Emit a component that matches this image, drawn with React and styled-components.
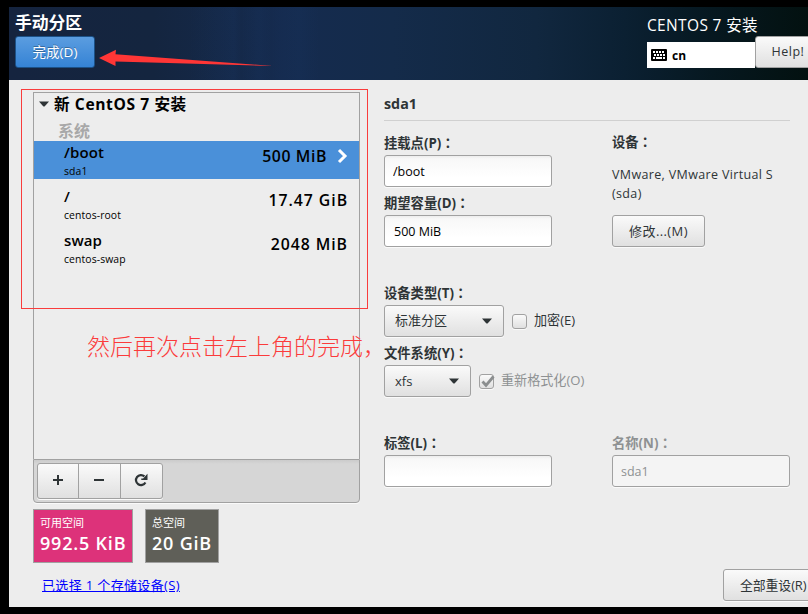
import React from 'react';
import styled, { createGlobalStyle, css } from 'styled-components';

const GlobalStyle = createGlobalStyle`
  * {
    box-sizing: border-box;
  }

  body {
    margin: 0;
    background: #000;
    color: #2e3436;
    font-family: "Open Sans", "Noto Sans CJK SC", sans-serif;
    font-size: 12px;
    overflow: hidden;
  }
`;

const mounts = [
  { name: '/boot', device: 'sda1', size: '500 MiB', active: true, spacing: 0.6 },
  { name: '/', device: 'centos-root', size: '17.47 GiB', spacing: 0.95 },
  { name: 'swap', device: 'centos-swap', size: '2048 MiB', spacing: 0.95 },
];

const Keyboard = () => (
  <svg width="16" height="12" viewBox="0 0 16 12">
    <rect width="16" height="12" rx="1" fill="#000" />
    <path
      d="M2 2h2v2H2zM5 2h2v2H5zM8 2h2v2H8zM11 2h2v2h-2zM3 5h2v2H3zM6 5h2v2H6zM9 5h2v2H9zM12 5h2v2h-2zM2 8h2v2H2zM5 8h6v2H5zM12 8h2v2h-2z"
      fill="#fff"
    />
  </svg>
);

const Caret = () => (
  <svg width="10" height="6" viewBox="0 0 10 6">
    <path d="M0 .5h10L5.8 5.2q-.8.8-1.6 0z" fill="#2e3436" />
  </svg>
);

const Chevron = () => (
  <svg width="11" height="16" viewBox="0 0 11 16">
    <path d="M2 2l6 6-6 6" fill="none" stroke="#fff" strokeWidth="3" />
  </svg>
);

const Reload = () => (
  <svg width="14" height="14" viewBox="0 0 14 14">
    <path d="M11.4 9.4A5 5 0 1 1 10.4 3.4" fill="none" stroke="#2e3436" strokeWidth="2.2" />
    <path d="M13.5.8V7H7.3V5.6h1.8L13 1.2z" fill="#2e3436" />
  </svg>
);

const Check = () => (
  <svg width="16" height="14" viewBox="0 0 16 14">
    <path d="M2.5 6.5L6 10.3l7.5-8.8" fill="none" stroke="#8b8e8f" strokeWidth="2.8" />
  </svg>
);

const App = () => {
  return (
    <Screen>
      <GlobalStyle />
      <Header>
        <HeaderLeft>
          <Title>手动分区</Title>
          <PrimaryButton width={80}>完成(D)</PrimaryButton>
        </HeaderLeft>
        <Product>
          <ProductName>CENTOS 7 安装</ProductName>
          <Layout>
            <Keyboard />
            <span>cn</span>
          </Layout>
        </Product>
        <HelpButton width={66}>Help!</HelpButton>
      </Header>

      <Content>
        <Sidebar>
          <Tree>
            <TreeTitle>
              <Caret />
              <span>新 CentOS 7 安装</span>
            </TreeTitle>
            <Group>系统</Group>
            {mounts.map((mount) => (
              <Row key={mount.name} $active={mount.active}>
                <div>
                  <Mount>{mount.name}</Mount>
                  <Device>{mount.device}</Device>
                </div>
                <Size $spacing={mount.spacing}>
                  {mount.size}
                  {mount.active && <Chevron />}
                </Size>
              </Row>
            ))}
          </Tree>
          <Toolbar>
            <Tools>
              <Tool>
                <svg width="10" height="10"><path d="M5 0v10M0 5h10" stroke="#2e3436" strokeWidth="2" /></svg>
              </Tool>
              <Tool>
                <svg width="10" height="10"><path d="M0 5h10" stroke="#2e3436" strokeWidth="2" /></svg>
              </Tool>
              <Tool>
                <Reload />
              </Tool>
            </Tools>
          </Toolbar>
          <Stats>
            <Stat $color="#dd327a" $width={100}>
              <small>可用空间</small>
              <strong>992.5 KiB</strong>
            </Stat>
            <Stat $color="#5f5f58" $width={74}>
              <small>总空间</small>
              <strong>20 GiB</strong>
            </Stat>
          </Stats>
          <StorageLink href="#">已选择 1 个存储设备(S)</StorageLink>
        </Sidebar>

        <Details>
          <DetailsTitle>sda1</DetailsTitle>
          <Columns>
            <Fields>
              <Field>
                <Label>挂载点(P)<Colon>：</Colon></Label>
                <Input defaultValue="/boot" />
              </Field>
              <Field>
                <Label>期望容量(D)<Colon>：</Colon></Label>
                <Input defaultValue="500 MiB" $indent={9} />
              </Field>
            </Fields>
            <DeviceInfo>
              <DeviceLabel>设备<Colon>：</Colon></DeviceLabel>
              <p>VMware, VMware Virtual S<br />(sda)</p>
              <ModifyButton width={93}>修改...(M)</ModifyButton>
            </DeviceInfo>

            <Fields>
              <Field>
                <Label>设备类型(T)<Colon>：</Colon></Label>
                <Line>
                  <Select $width={120}><Choice $lift={4}>标准分区</Choice> <Caret /></Select>
                  <Checkbox>
                    <i />
                    <span>加密(E)</span>
                  </Checkbox>
                </Line>
              </Field>
              <Field>
                <Label>文件系统(Y)<Colon>：</Colon></Label>
                <Line>
                  <Select $width={87}><Choice>xfs</Choice> <Caret /></Select>
                  <Checkbox $disabled>
                    <i><Check /></i>
                    <span>重新格式化(O)</span>
                  </Checkbox>
                </Line>
              </Field>
            </Fields>
            <div />

            <Field>
              <Label>标签(L)<Colon>：</Colon></Label>
              <Input defaultValue="" />
            </Field>
            <Field>
              <Label $disabled>名称(N)<Colon>：</Colon></Label>
              <Input defaultValue="sda1" $width={178} disabled />
            </Field>
          </Columns>
          <Footer>
            <ResetButton width={101}>全部重设(R)</ResetButton>
          </Footer>
        </Details>
      </Content>

      <Outline />
      <Note>然后再次点击左上角的完成，</Note>
      <Arrow width="176" height="18" viewBox="0 0 176 18">
        <path d="M0 9L17 .8l-.5 4.400L174 16.900 16.500 12.600v4.400z" fill="#ff3636" />
      </Arrow>
    </Screen>
  );
};

const Screen = styled.div`
  position: relative;
  width: 808px;
  height: 614px;
  padding: 7px 0 7px 9px;
  background: #000;
  overflow: hidden;
`;

const Header = styled.header`
  display: flex;
  height: 73px;
  padding-left: 6px;
  background:
    linear-gradient(90deg, transparent 180px, rgba(30, 70, 130, 0.1) 225px, transparent 232px, rgba(30, 70, 130, 0.08) 250px, transparent 262px, rgba(30, 70, 130, 0.08) 290px, transparent 310px),
    linear-gradient(90deg, #15243f 0, #14253f 18%, #152b4f 34%, #142b4a 48%, #11273f 66%, #0b2032 77%, #061820 88%, #031110 100%);
`;

const HeaderLeft = styled.div`
  flex: 0 0 632px;
`;

const Title = styled.h1`
  height: 29px;
  margin: 0;
  color: #fff;
  font-size: 16.8px;
  font-weight: 700;
  line-height: 31px;
`;

const raised = css`
  border: 1px solid #a1a1a1;
  border-radius: 3px;
  background: linear-gradient(#fafafa, #e0e0e0);
  box-shadow: 0 1px #fafafa;
`;

const Button = styled.button.withConfig({ shouldForwardProp: (prop) => prop !== 'width' })`
  ${raised}
  flex-shrink: 0;
  display: block;
  width: ${({ width }) => width}px;
  height: 32px;
  padding: 0;
  color: #2e3436;
  font: 12.5px/30px "Open Sans", "Noto Sans CJK SC", sans-serif;
  white-space: nowrap;
`;

const PrimaryButton = styled(Button)`
  border-color: #1c5187;
  background: linear-gradient(#5b9de0, #3583d5);
  box-shadow: none;
  color: #fff;
  font-size: 13.5px;
  text-shadow: 0 -1px rgba(0, 0, 0, 0.3);
`;

const ModifyButton = styled(Button)`
  font-size: 13px;
  letter-spacing: 0.4px;
`;

const ResetButton = styled(Button)`
  padding-left: 16px;
  font-size: 12.9px;
  letter-spacing: -0.1px;
  text-align: left;
`;

const Product = styled.div`
  flex: 0 0 108px;
  min-width: 0;
  color: #fff;
`;

const ProductName = styled.div`
  height: 35px;
  font-size: 15.5px;
  letter-spacing: 0.35px;
  line-height: 37px;
  white-space: nowrap;
`;

const Layout = styled.div`
  display: flex;
  align-items: center;
  gap: 5px;
  height: 26px;
  padding-left: 4px;
  background: #fff;
  color: #000;
  font-weight: 700;
`;

const HelpButton = styled(Button)`
  margin-top: 29px;
  letter-spacing: 0.5px;
  box-shadow: none;
`;

const Content = styled.main`
  display: flex;
  height: 527px;
  padding: 12px 0 0 24px;
  background: #ededed;
`;

const Sidebar = styled.aside`
  width: 327px;
`;

const Tree = styled.div`
  height: 367px;
  border: 1px solid #a1a1a1;
  border-bottom: 0;
  color: #000;
`;

const TreeTitle = styled.div`
  display: flex;
  align-items: center;
  gap: 5px;
  height: 24px;
  padding-left: 5px;
  font-size: 15.6px;
  font-weight: 700;
  letter-spacing: 0.6px;
  line-height: 20px;
  white-space: nowrap;

  span {
    margin-top: -3px;
  }

  svg {
    margin-top: -2px;
  }
`;

const Group = styled.div`
  height: 24px;
  padding-left: 24px;
  color: #a8a8a8;
  font-size: 16px;
  font-weight: 700;
  line-height: 28px;
`;

const Row = styled.div`
  display: flex;
  justify-content: space-between;
  height: 38px;
  margin-bottom: 6px;
  padding: 0 11px 0 30px;
  background: ${({ $active }) => ($active ? '#4a90d9' : 'transparent')};
`;

const Mount = styled.div`
  height: 23px;
  font-size: 15px;
  font-weight: 600;
  letter-spacing: 0.1px;
  line-height: 23px;
`;

const Device = styled.div`
  font-size: 10.4px;
  letter-spacing: 0.1px;
  line-height: 14px;
`;

const Size = styled.div`
  display: flex;
  align-items: center;
  gap: 10px;
  height: 30px;
  font-size: 15.8px;
  font-weight: 600;
  letter-spacing: ${({ $spacing }) => $spacing}px;
`;

const Toolbar = styled.div`
  height: 44px;
  padding: 3px;
  border: 1px solid #a1a1a1;
  border-radius: 0 0 4px 4px;
  background: linear-gradient(#cbcbcb, #d6d6d6 4px);
  box-shadow: 0 1px #fafafa;
`;

const Tools = styled.div`
  ${raised}
  display: flex;
  width: 126px;
  height: 36px;
`;

const Tool = styled.div`
  display: flex;
  flex: 0 0 42px;
  align-items: center;
  justify-content: center;
  padding-bottom: 2px;

  &:first-child {
    flex-basis: 40px;
  }

  & + & {
    padding-right: 2px;
    border-left: 1px solid #a1a1a1;
  }
`;

const Stats = styled.div`
  display: flex;
  gap: 12px;
  margin-top: 6px;
`;

const Stat = styled.div`
  width: ${({ $width }) => $width}px;
  height: 54px;
  padding: 4px 0 0 6px;
  border: 1px solid #a1a1a1;
  background: ${({ $color }) => $color};
  color: #fff;
  white-space: nowrap;

  small,
  strong {
    display: block;
  }

  small {
    font-size: 11px;
    line-height: 18px;
  }

  strong {
    font-size: 18px;
    font-weight: 600;
    letter-spacing: 0.8px;
    line-height: 23px;
  }
`;

const StorageLink = styled.a`
  display: inline-block;
  margin: 12px 0 0 9px;
  color: #0000ff;
  font-size: 13px;
  letter-spacing: 0.35px;
  line-height: 20px;
`;

const Details = styled.section`
  width: 424px;
  margin-left: 24px;
`;

const DetailsTitle = styled.h2`
  width: 406px;
  height: 29px;
  margin: 0 0 10px;
  border-bottom: 1px solid #d0d0d0;
  font-size: 14.3px;
  font-weight: 700;
  line-height: 23px;
`;

const Columns = styled.div`
  display: grid;
  grid-template-columns: 228px 1fr;
  row-gap: 30px;
`;

const Fields = styled.div`
  height: 120px;
`;

const Field = styled.div`
  height: 60px;
`;

const Label = styled.div`
  height: 24px;
  color: ${({ $disabled }) => ($disabled ? '#8e9192' : '#2e3436')};
  font-size: 13.3px;
  font-weight: 700;
  line-height: 24px;
  white-space: nowrap;
`;

// the TC face centres the full-width colon
const Colon = styled.span`
  font-family: "Noto Sans CJK TC", sans-serif;
`;

const Input = styled.input`
  display: block;
  width: ${({ $width = 168 }) => $width}px;
  height: 32px;
  padding: 1px 8px 0 ${({ $indent = 8 }) => $indent}px;
  border: 1px solid #a1a1a1;
  border-radius: 3px;
  background: linear-gradient(#ededed, #f8f8f8 3px, #fff 22px);
  box-shadow: 0 1px #fafafa;
  color: #000;
  font: 12.5px "Open Sans", "Noto Sans CJK SC", sans-serif;

  &:disabled {
    background: #f4f4f4;
    color: #8e9192;
  }
`;

const DeviceInfo = styled.div`
  p {
    height: 63px;
    margin: 0;
    padding-top: 13px;
    font-size: 12.5px;
    letter-spacing: 0.35px;
    line-height: 19px;
  }
`;

const DeviceLabel = styled(Label)`
  height: 21px;
  line-height: 21px;
`;

const Line = styled.div`
  display: flex;
  align-items: center;
  gap: 8px;
`;

const Select = styled.div`
  ${raised}
  display: flex;
  align-items: center;
  justify-content: space-between;
  width: ${({ $width }) => $width}px;
  height: 32px;
  padding: 0 11px 0 10px;
  font-size: 13px;
`;

const Choice = styled.span`
  padding-bottom: ${({ $lift = 0 }) => $lift}px;
`;

const Checkbox = styled.label`
  display: flex;
  align-items: center;
  gap: 7px;
  color: ${({ $disabled }) => ($disabled ? '#8e9192' : '#2e3436')};
  font-size: 13.1px;
  white-space: nowrap;

  i {
    ${raised}
    width: 15px;
    height: 15px;
  }

  span {
    padding-bottom: 3px;
  }

  svg {
    display: block;
  }
`;

const Footer = styled.div`
  display: flex;
  margin: 78px 0 0 339px;
`;

const Outline = styled.div`
  position: absolute;
  top: 89px;
  left: 21px;
  width: 347px;
  height: 220px;
  border: 1px solid #f93c3c;
`;

const Note = styled.div`
  position: absolute;
  top: 328px;
  left: 87px;
  color: #fb3b3b;
  font-family: "Noto Sans CJK SC", sans-serif;
  font-size: 23px;
  font-weight: 300;
  line-height: 34px;
  white-space: nowrap;
`;

const Arrow = styled.svg`
  position: absolute;
  top: 49px;
  left: 99px;
`;

export default App;
